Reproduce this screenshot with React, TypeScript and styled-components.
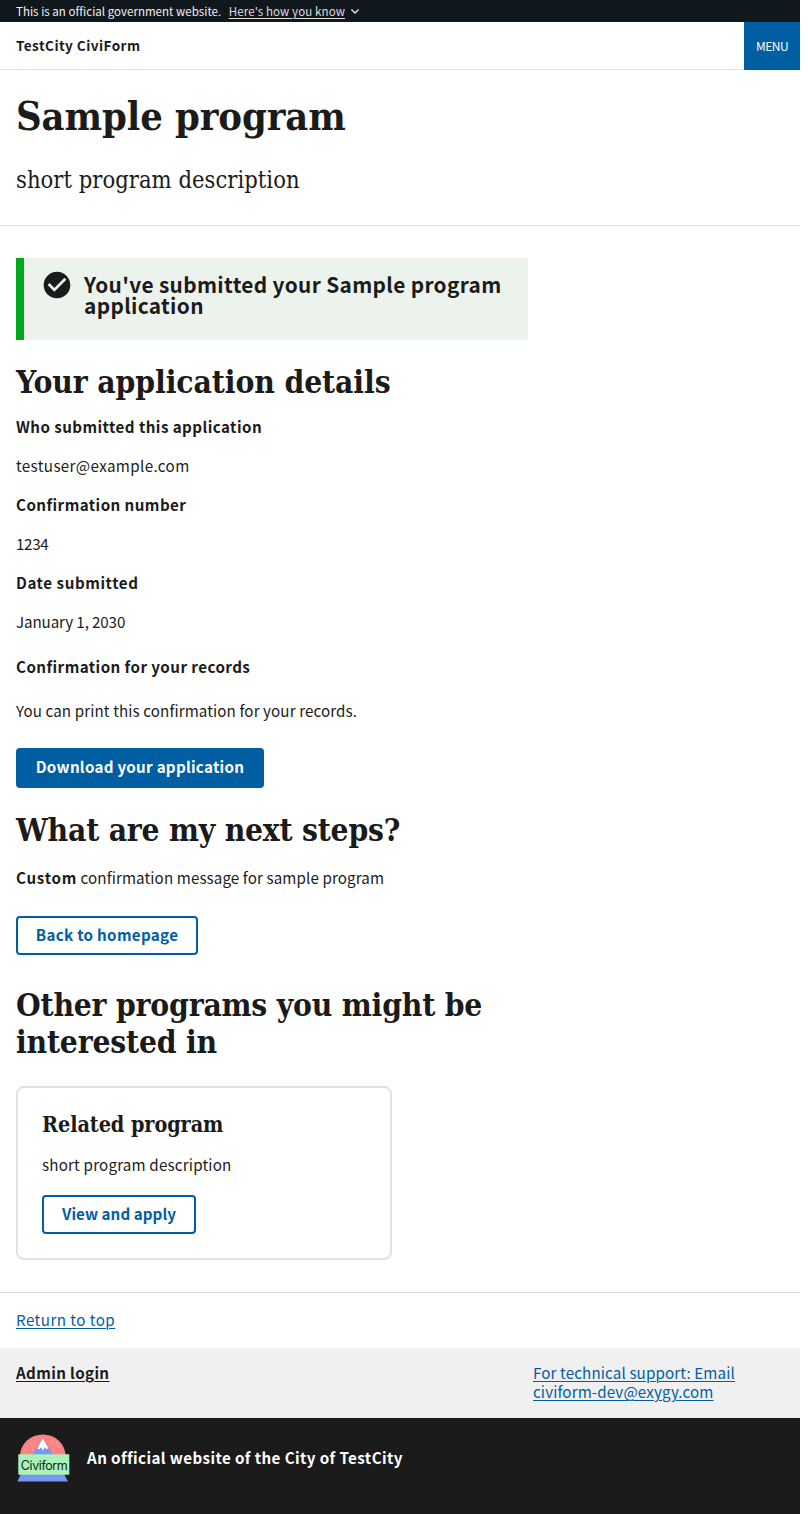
import React from "react";
import styled, { createGlobalStyle, css } from "styled-components";

const sans = `"Noto Sans CJK SC", "Noto Sans CJK JP", "Open Sans", sans-serif`;
const serif = `"DejaVu Serif Condensed", "DejaVu Serif", serif`;
const blue = "#005ea2";
const ink = "#1b1b1b";

const GlobalStyle = createGlobalStyle`
  *, *::before, *::after { box-sizing: border-box; }
  html { background: #fff; }
  body { margin: 0; font-family: ${sans}; font-size: 15.18px; line-height: 19px; color: ${ink}; }
  h1, h2, h3, p, dl, dt, dd { margin: 0; }
`;

const Page = styled.div`
  width: 800px;
  display: flex;
  flex-direction: column;
`;

const Banner = styled.div`
  display: flex;
  align-items: center;
  height: 22px;
  padding: 0 16px;
  background: #11181d;
  color: #f0f0f0;
  font-size: 11.5px;
  line-height: 22px;
  letter-spacing: 0.03px;
  white-space: nowrap;
`;

const BannerToggle = styled.span`
  display: inline-flex;
  align-items: center;
  gap: 5px;
  margin-left: 7.5px;
  color: #dcdee0;
`;

const Underlined = styled.span<{ $spacing?: number }>`
  text-decoration: underline;
  text-underline-offset: 2px;
  text-decoration-thickness: 1px;
  letter-spacing: ${(p) => p.$spacing ?? 0}px;
`;

const Header = styled.header`
  display: flex;
  justify-content: space-between;
  height: 48px;
  padding-left: 16px;
  border-bottom: 1px solid #dfe1e2;
`;

const SiteTitle = styled.div`
  font-size: 13.6px;
  line-height: 47px;
  font-weight: 700;
  letter-spacing: 0.42px;
`;

const MenuButton = styled.button`
  width: 56px;
  height: 48px;
  padding: 0;
  border: 0;
  background: ${blue};
  color: #fff;
  font: 12px/48px ${sans};
  letter-spacing: -0.5px;
`;

const Intro = styled.section`
  height: 156px;
  padding: 22px 16px 0;
  border-bottom: 1px solid #dfe1e2;
`;

const Title = styled.h1`
  font: 700 39.5px/48px ${serif};
  letter-spacing: -0.1px;
`;

const Lead = styled.p`
  margin-top: 24px;
  font: 400 23.5px/32px ${serif};
  letter-spacing: 0.04px;
`;

const Main = styled.main`
  display: flex;
  flex-direction: column;
  align-items: flex-start;
  width: 544px;
  padding: 32px 16px;
`;

const Alert = styled.div`
  display: flex;
  gap: 11px;
  width: 512px;
  height: 82px;
  padding: 11px 16px 0 17px;
  border-left: 8px solid #00a91c;
  background: #ecf3ec;

  svg { flex: none; }
`;

const AlertText = styled.p`
  padding-top: 5px;
  font-size: 20.8px;
  line-height: 21px;
  font-weight: 700;
  letter-spacing: 0.35px;
  white-space: nowrap;
`;

const Heading = styled.h2<{ $top: number; $spacing?: number }>`
  margin-top: ${(p) => p.$top}px;
  font: 700 31.5px/37px ${serif};
  letter-spacing: ${(p) => p.$spacing ?? -0.15}px;
  white-space: nowrap;
`;

const Details = styled.dl`
  display: flex;
  flex-direction: column;
  gap: 20px;
  margin-top: 17px;
`;

const Term = styled.dt<{ $spacing?: number }>`
  font-weight: 700;
  letter-spacing: ${(p) => p.$spacing ?? 0.43}px;
`;

const Value = styled.dd<{ $spacing?: number }>`
  letter-spacing: ${(p) => p.$spacing ?? 0}px;
`;

const Copy = styled.p<{ $top: number; $bold?: boolean; $spacing?: number }>`
  margin-top: ${(p) => p.$top}px;
  font-weight: ${(p) => (p.$bold ? 700 : 400)};
  letter-spacing: ${(p) => p.$spacing ?? 0}px;
`;

const Strong = styled.strong`
  font-weight: 700;
  letter-spacing: 0.7px;
`;

const Button = styled.button<{ $outline?: boolean; $top: number; $width: number; $spacing?: number }>`
  width: ${(p) => p.$width}px;
  height: 40px;
  margin-top: ${(p) => p.$top}px;
  padding: 0 0 4px;
  border: 0;
  border-radius: 4px;
  background: ${blue};
  color: #fff;
  font: 700 15.18px/36px ${sans};
  letter-spacing: ${(p) => p.$spacing ?? 0}px;
  white-space: nowrap;
  ${(p) =>
    p.$outline &&
    css`
      height: 39px;
      padding-bottom: 2px;
      line-height: 33px;
      border: 2px solid ${blue};
      background: #fff;
      color: ${blue};
    `}
`;

const Card = styled.article`
  display: flex;
  flex-direction: column;
  align-items: flex-start;
  width: 376px;
  height: 174px;
  margin-top: 26px;
  padding: 22px 24px;
  border: 2px solid #dfe1e2;
  border-radius: 8px;
`;

const CardTitle = styled.h3`
  font: 700 21.4px/30px ${serif};
  letter-spacing: -0.05px;
`;

const ReturnBar = styled.div`
  height: 56px;
  padding: 17px 16px 0;
  border-top: 1px solid #dfe1e2;
  color: ${blue};
`;

const Contact = styled.div`
  display: flex;
  height: 70px;
  padding: 15px 16px 0;
  background: #f0f0f0;
`;

const AdminLink = styled.div`
  width: 517px;
  font-weight: 700;
`;

const Support = styled.div`
  color: ${blue};
`;

const Identifier = styled.footer`
  display: flex;
  gap: 15px;
  height: 96px;
  padding: 16px 16px 0;
  background: ${ink};
  color: #fff;
`;

const IdentifierText = styled.p`
  padding-top: 14px;
  font-weight: 700;
  letter-spacing: 0.4px;
`;

const CheckCircle = () => (
  <svg width="32" height="32" viewBox="0 0 24 24">
    <path
      fill={ink}
      d="M12 2C6.48 2 2 6.48 2 12s4.48 10 10 10 10-4.48 10-10S17.52 2 12 2zm-2 15-5-5 1.41-1.41L10 14.17l7.59-7.59L19 8l-9 9z"
    />
  </svg>
);

const Chevron = () => (
  <svg width="10" height="10" viewBox="0 0 10 10">
    <path d="M1.4 3.5 5 7l3.6-3.5" fill="none" stroke="#dcdee0" strokeWidth="1.5" />
  </svg>
);

const Logo = () => (
  <svg width="56" height="50" viewBox="0 0 56 50">
    <path d="M4 22a22.8 21.600 0 0 1 45.600 0z" fill="#fa8383" />
    <path d="M26.800 5 38 22H15.500z" fill="#7698f0" />
    <path d="m26.800 4.300 5.500 10-2 .8-1.700-2-1.800 3.700-1.800-3.500-1.900 2.200-1.600-1.200z" fill="#fff" />
    <g fill="#ffc2c2">
      <circle cx="19" cy="7" r=".7" />
      <circle cx="14.500" cy="9.500" r=".7" />
      <circle cx="11" cy="12" r=".7" />
      <circle cx="16.500" cy="15.500" r=".7" />
      <circle cx="9.700" cy="15.500" r=".7" />
      <circle cx="36" cy="8" r=".7" />
      <circle cx="41" cy="9" r=".7" />
      <circle cx="43" cy="13" r=".7" />
      <circle cx="37.500" cy="15.500" r=".7" />
    </g>
    <path d="M5 40h43l4 7.500H1.300z" fill="#7698f0" />
    <path d="M2.300 20.300h51v20.400h-51z" fill="#aaf3b8" />
    <text x="4.800" y="35.500" fontFamily="Inter, sans-serif" fontSize="12.500" textLength="47" fill="#16251a">
      Civiform
    </text>
  </svg>
);

export default function App() {
  return (
    <Page>
      <GlobalStyle />
      <Banner>
        <span>This is an official government website.</span>
        <BannerToggle>
          <Underlined $spacing={0.12}>Here's how you know</Underlined>
          <Chevron />
        </BannerToggle>
      </Banner>
      <Header>
        <SiteTitle>TestCity CiviForm</SiteTitle>
        <MenuButton>MENU</MenuButton>
      </Header>
      <Intro>
        <Title>Sample program</Title>
        <Lead>short program description</Lead>
      </Intro>
      <Main>
        <Alert>
          <CheckCircle />
          <AlertText>
            You've submitted your Sample program
            <br />
            application
          </AlertText>
        </Alert>
        <Heading $top={23} $spacing={-0.1}>Your application details</Heading>
        <Details>
          <Term>Who submitted this application</Term>
          <Value $spacing={0.36}>testuser@example.com</Value>
          <Term>Confirmation number</Term>
          <Value $spacing={-0.35}>1234</Value>
          <Term $spacing={0.55}>Date submitted</Term>
          <Value $spacing={-0.12}>January 1, 2030</Value>
        </Details>
        <Copy $top={26} $bold $spacing={0.43}>Confirmation for your records</Copy>
        <Copy $top={25} $spacing={0.1}>You can print this confirmation for your records.</Copy>
        <Button $top={28} $width={248} $spacing={0.27}>Download your application</Button>
        <Heading $top={23} $spacing={-0.22}>What are my next steps?</Heading>
        <Copy $top={20} $spacing={0.1}>
          <Strong>Custom</Strong> confirmation message for sample program
        </Copy>
        <Button $outline $top={29} $width={182} $spacing={0.3}>Back to homepage</Button>
        <Heading $top={31} $spacing={-0.2}>
          Other programs you might be
          <br />
          interested in
        </Heading>
        <Card>
          <CardTitle>Related program</CardTitle>
          <Copy $top={15} $spacing={0.18}>short program description</Copy>
          <Button $outline $top={21} $width={154} $spacing={0.06}>View and apply</Button>
        </Card>
      </Main>
      <ReturnBar>
        <Underlined $spacing={0.45}>Return to top</Underlined>
      </ReturnBar>
      <Contact>
        <AdminLink>
          <Underlined $spacing={0.35}>Admin login</Underlined>
        </AdminLink>
        <Support>
          <Underlined $spacing={0.12}>
            For technical support: Email
            <br />
            civiform-dev@exygy.com
          </Underlined>
        </Support>
      </Contact>
      <Identifier>
        <Logo />
        <IdentifierText>An official website of the City of TestCity</IdentifierText>
      </Identifier>
    </Page>
  );
}
